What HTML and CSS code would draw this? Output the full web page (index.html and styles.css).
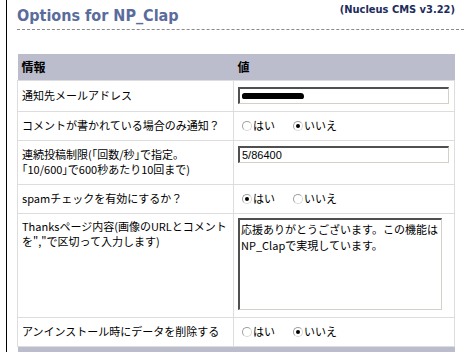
FILE: index.html
```html
<!DOCTYPE html>
<html lang="ja">
<head>
<meta charset="utf-8">
<title>Options for NP_Clap</title>
<link rel="stylesheet" href="styles.css">
</head>
<body>
<div class="page">
  <div class="head">
    <h2 class="title">Options for NP_Clap</h2>
    <div class="version">(Nucleus CMS v3.22)</div>
  </div>
  <table class="opts">
    <colgroup><col class="c1"><col class="c2"></colgroup>
    <tr class="hd"><th>情報</th><th>値</th></tr>
    <tr class="r1">
      <td>通知先メールアドレス</td>
      <td><div class="field"><span class="redact"></span></div></td>
    </tr>
    <tr class="r1">
      <td>コメントが書かれている場合のみ通知？</td>
      <td><span class="radio"></span><span class="lbl">はい</span><span class="radio on"></span><span class="lbl">いいえ</span></td>
    </tr>
    <tr class="r3">
      <td>連続投稿制限(｢回数/秒｣で指定。<br>｢10/600｣で600秒あたり10回まで)</td>
      <td class="top"><input class="field txt" type="text" value="5/86400"></td>
    </tr>
    <tr class="r1">
      <td>spamチェックを有効にするか？</td>
      <td><span class="radio on"></span><span class="lbl">はい</span><span class="radio"></span><span class="lbl">いいえ</span></td>
    </tr>
    <tr class="r5">
      <td class="top">Thanksページ内容(画像のURLとコメントを&quot;,&quot;で区切って入力します)</td>
      <td class="top"><textarea class="area">応援ありがとうございます。この機能はNP_Clapで実現しています。</textarea></td>
    </tr>
    <tr class="r1">
      <td>アンインストール時にデータを削除する</td>
      <td><span class="radio"></span><span class="lbl">はい</span><span class="radio on"></span><span class="lbl">いいえ</span></td>
    </tr>
    <tr class="hd"><th>&nbsp;</th><th>&nbsp;</th></tr>
  </table>
</div>
</body>
</html>
```

FILE: styles.css
```css
html, body {
  margin: 0;
  padding: 0;
  background: #fff;
}
body {
  font-family: "Noto Sans CJK JP", "DejaVu Sans", sans-serif;
  font-size: 11px;
  color: #000;
}
.page {
  margin-left: 6px;
  border-left: 1px solid #000;
  padding-left: 10px;
  min-height: 352px;
  box-sizing: border-box;
}
.head {
  display: flex;
  justify-content: space-between;
  align-items: flex-start;
  height: 30px;
  border-bottom: 1px dashed #8a8a8a;
  box-sizing: border-box;
}
.title {
  margin: 6px 0 0 0;
  font-family: "DejaVu Sans Condensed", "DejaVu Sans", sans-serif;
  font-weight: bold;
  font-size: 16px;
  line-height: 20px;
  color: #5a6c9c;
}
.version {
  margin: 3px 9px 0 0;
  font-family: "DejaVu Sans Condensed", "DejaVu Sans", sans-serif;
  font-weight: bold;
  font-size: 11px;
  line-height: 14px;
  color: #1c2c5c;
}
.opts {
  margin-top: 24px;
  width: 437px;
  table-layout: fixed;
  border-collapse: collapse;
}
.c1 { width: 216px; }
.c2 { width: 221px; }
.opts th {
  background: #bbbccc;
  text-align: left;
  font-weight: bold;
  font-size: 12px;
  line-height: 16px;
  padding: 5px 4px 5px 4px;
  height: 16px;
}
.opts td {
  border: 1px solid #dddddd;
  padding: 6px 4px 7px 4px;
  line-height: 15px;
  vertical-align: middle;
}
.opts td.top { vertical-align: top; }
.r1 td { height: 15px; }
.r3 td { height: 30px; }
.r3 td.top { padding-top: 5px; }
.r5 td.top { padding-top: 4px; padding-bottom: 7px; }
.r5 td:first-child { padding-top: 5px; }
.field {
  display: block;
  width: 211px;
  height: 17px;
  box-sizing: border-box;
  margin: 0;
  padding: 0 2px;
  border-top: 2px solid #505050;
  border-left: 2px solid #505050;
  border-right: 1px solid #d4d0c8;
  border-bottom: 1px solid #d4d0c8;
  background: #fff;
}
.redact {
  display: block;
  width: 62px;
  height: 6px;
  margin-top: 4px;
  background: #000;
  border-radius: 3px 4px 3px 2px;
}
.txt {
  font-family: "Liberation Sans", "DejaVu Sans", sans-serif;
  font-size: 11px;
  color: #000;
  outline: none;
}
.area {
  display: block;
  width: 204px;
  height: 92px;
  box-sizing: border-box;
  margin: 0;
  padding: 1px 1px;
  border-top: 2px solid #505050;
  border-left: 2px solid #505050;
  border-right: 1px solid #d4d0c8;
  border-bottom: 1px solid #d4d0c8;
  font-family: "Noto Sans CJK JP", sans-serif;
  font-size: 11px;
  line-height: 16px;
  resize: none;
  overflow: hidden;
  color: #000;
}
.radio {
  display: inline-block;
  width: 10px;
  height: 10px;
  box-sizing: border-box;
  border: 1px solid #a0a0a0;
  border-right-color: #d8d8d8;
  border-bottom-color: #d8d8d8;
  border-radius: 50%;
  background: #fff;
  vertical-align: -1px;
  margin: 0 1px 0 4px;
  position: relative;
}
.radio.on::after {
  content: "";
  position: absolute;
  left: 2px;
  top: 2px;
  width: 4px;
  height: 4px;
  background: #000;
  border-radius: 50%;
}
.lbl {
  margin-right: 14px;
}
```
